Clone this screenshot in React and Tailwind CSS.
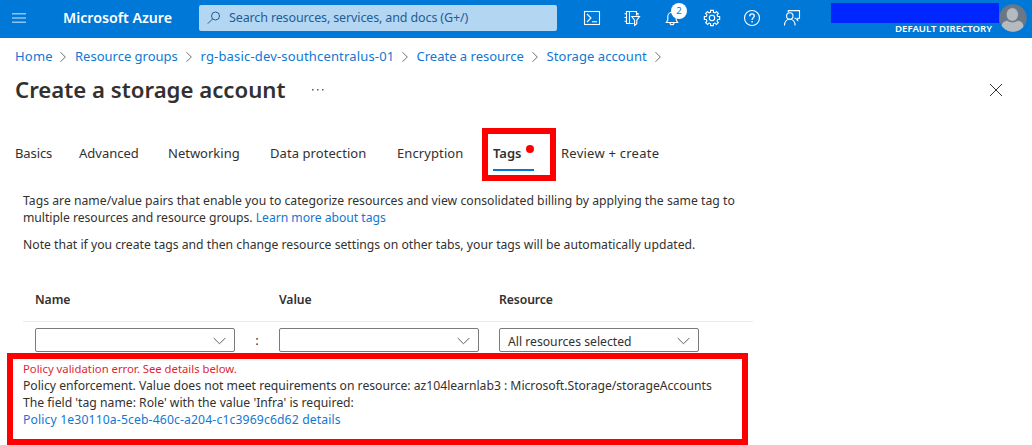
import React from "react";

const crumbs = [
  { label: "Home", cell: "w-[60px]", track: "tracking-[0.2px]" },
  { label: "Resource groups", cell: "w-[125.5px]", track: "tracking-[0px]" },
  { label: "rg-basic-dev-southcentralus-01", cell: "w-[216px]", track: "tracking-[0.17px]" },
  { label: "Create a resource", cell: "w-[130px]", track: "tracking-[0px]" },
  { label: "Storage account", cell: "w-[123px]", track: "tracking-[0.07px]" },
];

const tabs = [
  { label: "Basics", cell: "w-[64px]", track: "tracking-[-0.1px]" },
  { label: "Advanced", cell: "w-[89px]", track: "tracking-[0px]" },
  { label: "Networking", cell: "w-[102px]", track: "tracking-[0px]" },
  { label: "Data protection", cell: "w-[127px]", track: "tracking-[0.07px]" },
  { label: "Encryption", cell: "w-[96px]", track: "tracking-[0.1px]" },
  { label: "Tags", cell: "w-[68px]", track: "tracking-[0px]", active: true },
  { label: "Review + create", cell: "w-[110px]", track: "tracking-[0.24px]" },
];

function Icon({ children, className = "" }) {
  return (
    <svg viewBox="0 0 20 20" className={`h-5 w-5 shrink-0 ${className}`} fill="none" stroke="currentColor" strokeWidth="1.1">
      {children}
    </svg>
  );
}

function CrumbChevron() {
  return (
    <svg viewBox="0 0 8 12" className="mt-px h-3 w-2 shrink-0" fill="none" stroke="#605e5c" strokeWidth="0.9">
      <path d="M1.5 1.2 6.3 6 1.5 10.8" />
    </svg>
  );
}

function Select({ value = "" }) {
  return (
    <div className="flex h-6 w-[200px] shrink-0 items-center justify-between rounded-[2px] border border-[#7c7a78] bg-white pr-[8.5px] pl-2 text-[12.2px] text-[#323130]">
      <span className="mt-[4px]">{value}</span>
      <svg viewBox="0 0 13 8" className="mt-px h-2 w-[13px]" fill="none" stroke="#605e5c" strokeWidth="1">
        <path d="M.7 1 6.5 6.8 12.3 1" />
      </svg>
    </div>
  );
}

function gearPath() {
  const pts = [];
  for (let i = 0; i < 8; i++) {
    const base = (i * Math.PI) / 4;
    [[-0.25, 5.9], [-0.18, 7.8], [0.18, 7.8], [0.25, 5.9]].forEach(([a, r]) => {
      pts.push(`${(10 + r * Math.sin(base + a)).toFixed(2)} ${(10 - r * Math.cos(base + a)).toFixed(2)}`);
    });
  }
  return `M${pts.join("L")}Z`;
}

function Header() {
  return (
    <header className="flex h-[38px] items-center bg-[#0078d7] text-white">
      <svg viewBox="0 0 14 10" className="mt-[-2px] ml-3 h-[10px] w-[14px] shrink-0" stroke="#8ec3ee" strokeWidth="1.5">
        <path d="M0 .8h14M0 5h14M0 9.2h14" />
      </svg>
      <div className="mt-[-1px] ml-[37px] w-[136px] shrink-0 text-[14.2px] leading-none font-semibold whitespace-nowrap">Microsoft Azure</div>
      <div className="mt-[-2px] flex h-[26px] w-[358px] shrink-0 items-center rounded-[2px] bg-[#b3d6f3] text-[#235c93]">
        <svg viewBox="0 0 14 14" className="ml-2 h-[14px] w-[14px]" fill="none" stroke="currentColor" strokeWidth="1">
          <circle cx="8.5" cy="5" r="4" />
          <path d="M5.6 7.9.8 12.7" />
        </svg>
        <span className="mt-px ml-2 text-[12.5px] tracking-[-0.13px] whitespace-nowrap">Search resources, services, and docs (G+/)</span>
      </div>
      <nav className="mt-[-2px] ml-[25px] flex shrink-0 gap-5">
        <Icon>
          <rect x="2.5" y="3.5" width="15" height="13" />
          <path d="m5 6 4 4-4 4M10 13.8h5" />
        </Icon>
        <Icon>
          <path d="M11.5 15.5h-7v-12h10v4M7.5 3.5v12M2.5 5.8h2M2.5 9.5h2M2.5 13.2h2M14.5 5.5h1.5v2" />
          <path d="M9.8 8.5h7.7l-2.7 3.7v3.6l-2.2 1.7v-5.3z" fill="#0078d7" />
        </Icon>
        <div className="relative">
          <Icon>
            <path d="M4.3 14.5h11.4L14.2 12V8.5a4.2 4.2 0 0 0-8.4 0V12zM8 14.8a2 2 0 0 0 4 0" />
          </Icon>
          <span className="absolute top-[-5px] left-[9px] flex h-4 w-4 items-center justify-center rounded-full bg-white text-[9.5px] leading-none text-[#0078d7]">2</span>
        </div>
        <Icon>
          <path d={gearPath()} />
          <circle cx="10" cy="10" r="2.7" />
        </Icon>
        <Icon>
          <circle cx="10" cy="10" r="7.5" />
          <path d="M7.7 8.2A2.3 2.3 0 0 1 10 5.9c1.3 0 2.3.9 2.3 2.1 0 1.7-2.2 1.8-2.2 3.7v.4M10.1 13.1v1.4" strokeWidth="1.3" />
        </Icon>
        <Icon>
          <path d="M6.3 4.3V2.6h11.2v7.6h-1.8v2.3l-2.3-2.3h-.9" />
          <circle cx="7.8" cy="8" r="3.2" />
          <path d="M2.5 17.5c0-3.7 2.300-6.300 5.300-6.300s5.300 2.600 5.300 6.300" />
        </Icon>
      </nav>
      <div className="ml-auto flex w-[168.5px] flex-col items-end self-start">
        <div className="mt-[3px] h-5 w-full bg-[#0026ff]" />
        <div className="mt-[1px] mr-[7px] text-[9.6px] leading-[9px] font-semibold whitespace-nowrap">DEFAULT DIRECTORY</div>
      </div>
      <svg viewBox="0 0 28 28" className="mt-[-2px] mr-[5px] h-7 w-7 shrink-0">
        <defs>
          <clipPath id="avatar"><circle cx="14" cy="14" r="13.7" /></clipPath>
        </defs>
        <g clipPath="url(#avatar)">
          <rect width="28" height="28" fill="#6b7785" />
          <path d="M2.5 28v-5c0-4 3-6.2 6-6.2 3 2.2 7 2.2 10 0 3.5 0 6 2.2 6 6.2v5z" fill="#b5bac0" />
          <ellipse cx="13.3" cy="10.5" rx="6.2" ry="6.9" fill="#b5bac0" stroke="#6b7785" strokeWidth="1" />
        </g>
      </svg>
    </header>
  );
}

export default function App() {
  return (
    <div className="relative h-[445px] w-[1032px] overflow-hidden bg-white font-['Noto_Sans','Open_Sans',sans-serif] text-[#323130]">
      <Header />

      <nav className="flex h-9 items-center pt-px pl-[15px] text-[13px] text-[#0f78d4]">
        {crumbs.map((c) => (
          <div key={c.label} className={`flex shrink-0 items-center justify-between pr-2 whitespace-nowrap ${c.cell}`}>
            <span className={c.track}>{c.label}</span>
            <CrumbChevron />
          </div>
        ))}
      </nav>

      <div className="flex h-8 items-center pr-[30px] pl-[15px]">
        <h1 className="mt-[-1px] w-[297px] shrink-0 text-[22.2px] leading-8 font-semibold whitespace-nowrap">Create a storage account</h1>
        <svg viewBox="0 0 12 2" className="h-[2px] w-3" fill="#605e5c">
          <path d="M0 0h1.5v1.5H0zM5 0h1.5v1.5H5zM10 0h1.5v1.5H10z" />
        </svg>
        <svg viewBox="0 0 12 12" className="ml-auto h-3 w-3" stroke="#323130" strokeWidth="1">
          <path d="m0 0 12 12M12 0 0 12" />
        </svg>
      </div>

      <div className="mt-[37px] flex h-7 pl-[15px] text-[13px] leading-5">
        {tabs.map((t) => (
          <div key={t.label} className={`shrink-0 whitespace-nowrap ${t.cell}`}>
            {t.active ? (
              <div className="relative h-7 w-[41px] border-b-2 border-[#0078d7] font-semibold">
                <span className={t.track}>{t.label}</span>
                <span className="absolute top-[2px] right-0 h-2 w-2 rounded-full bg-[#ff0000]" />
              </div>
            ) : (
              <span className={t.track}>{t.label}</span>
            )}
          </div>
        ))}
      </div>

      <div className="mt-[21px] pl-[23px] text-[12.2px] leading-[17px] whitespace-nowrap">
        <p className="tracking-[0.016px]">Tags are name/value pairs that enable you to categorize resources and view consolidated billing by applying the same tag to</p>
        <p className="tracking-[-0.04px]">
          multiple resources and resource groups. <a className="text-[#0f78d4]">Learn more about tags</a>
        </p>
        <p className="mt-[10px]">Note that if you create tags and then change resource settings on other tabs, your tags will be automatically updated.</p>
      </div>

      <div className="mt-[37px] ml-[23px] w-[730px] border-b border-[#edebe9]">
        <div className="flex h-[31px] pt-px pl-3 text-[12.2px] leading-[18px] font-semibold tracking-[-0.08px]">
          <div className="w-[244px]">Name</div>
          <div className="w-[220px]">Value</div>
          <div>Resource</div>
        </div>
      </div>
      <div className="mt-[6px] flex h-6 items-center pl-[35px]">
        <Select />
        <span className="w-11 pt-px text-center text-[13px]">:</span>
        <Select />
        <div className="w-5" />
        <Select value="All resources selected" />
      </div>

      <div className="mt-2 pl-[23px] text-[12.2px] leading-[17px] whitespace-nowrap">
        <p className="text-[11.3px] text-[#e01f35]">Policy validation error. See details below.</p>
        <p className="tracking-[-0.02px]">Policy enforcement. Value does not meet requirements on resource: az104learnlab3 : Microsoft.Storage/storageAccounts</p>
        <p>The field 'tag name: Role' with the value 'Infra' is required:</p>
        <p className="tracking-[0.135px]"><a className="text-[#0f78d4]">Policy 1e30110a-5ceb-460c-a204-c1c3969c6d62 details</a></p>
      </div>

      <div className="absolute top-[128px] left-[482px] h-[53px] w-[74px] border-[6px] border-[#ff0000]" />
      <div className="absolute top-[353px] left-[7px] h-[92px] w-[741px] border-[6px] border-[#ff0000]" />
    </div>
  );
}
